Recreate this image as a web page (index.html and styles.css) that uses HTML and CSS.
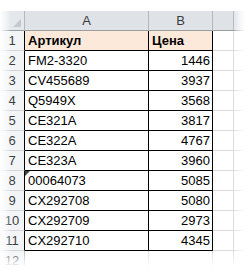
FILE: index.html
```html
<!DOCTYPE html>
<html>
<head>
<meta charset="utf-8">
<link rel="stylesheet" href="styles.css">
</head>
<body>
<div class="sheet">
  <table class="grid">
    <colgroup>
      <col class="c-rh"><col class="c-a"><col class="c-b"><col class="c-c"><col class="c-d">
    </colgroup>
    <tr class="hdr">
      <th class="corner"><span class="tri"></span></th>
      <th class="colh">A</th>
      <th class="colh">B</th>
      <th class="colh"></th>
      <th class="colh last"></th>
    </tr>
    <tr class="r1">
      <td class="rh">1</td><td class="d hd">Артикул</td><td class="d hd">Цена</td><td class="e"></td><td class="e"></td>
    </tr>
    <tr><td class="rh">2</td><td class="d">FM2-3320</td><td class="d n">1446</td><td class="e"></td><td class="e"></td></tr>
    <tr><td class="rh">3</td><td class="d">CV455689</td><td class="d n">3937</td><td class="e"></td><td class="e"></td></tr>
    <tr><td class="rh">4</td><td class="d">Q5949X</td><td class="d n">3568</td><td class="e"></td><td class="e"></td></tr>
    <tr><td class="rh">5</td><td class="d">CE321A</td><td class="d n">3817</td><td class="e"></td><td class="e"></td></tr>
    <tr><td class="rh">6</td><td class="d">CE322A</td><td class="d n">4767</td><td class="e"></td><td class="e"></td></tr>
    <tr><td class="rh">7</td><td class="d">CE323A</td><td class="d n">3960</td><td class="e"></td><td class="e"></td></tr>
    <tr><td class="rh">8</td><td class="d txt"><span class="flag"></span>00064073</td><td class="d n">5085</td><td class="e"></td><td class="e"></td></tr>
    <tr><td class="rh">9</td><td class="d">CX292708</td><td class="d n">5080</td><td class="e"></td><td class="e"></td></tr>
    <tr><td class="rh">10</td><td class="d">CX292709</td><td class="d n">2973</td><td class="e"></td><td class="e"></td></tr>
    <tr><td class="rh">11</td><td class="d">CX292710</td><td class="d n">4345</td><td class="e"></td><td class="e"></td></tr>
    <tr class="r12"><td class="rh">12</td><td class="e"></td><td class="e"></td><td class="e"></td><td class="e"></td></tr>
  </table>
  <div class="fade-left"></div>
  <div class="fade-right"></div>
  <div class="fade-bottom"></div>
</div>
</body>
</html>
```

FILE: styles.css
```css
html, body {
  margin: 0;
  padding: 0;
  background: #ffffff;
}
body {
  width: 248px;
  height: 277px;
  overflow: hidden;
  font-family: "Liberation Sans", Arial, sans-serif;
}
.sheet {
  position: relative;
  padding-top: 11px;
  width: 248px;
  height: 266px;
  overflow: hidden;
}
.grid {
  border-collapse: separate;
  border-spacing: 0;
  table-layout: fixed;
  width: 250px;
  font-size: 13px;
  color: #000;
}
.c-rh { width: 25px; }
.c-a { width: 124px; }
.c-b { width: 64px; }
.c-c { width: 21px; }
.c-d { width: 16px; }
th, td {
  height: 19px;
  padding: 0 3px;
  line-height: 19px;
  white-space: nowrap;
  overflow: hidden;
  box-sizing: content-box;
}
.hdr th {
  background: #dfe3e8;
  color: #3c3c3c;
  font-weight: normal;
  font-size: 13px;
  text-align: center;
  border-right: 1px solid #b4b8bd;
  border-bottom: 1px solid #9a9ea3;
  padding: 0;
}
.hdr th.corner {
  position: relative;
  background: #e4e7eb;
}
.tri {
  position: absolute;
  right: 3px;
  bottom: 3px;
  width: 0;
  height: 0;
  border-left: 8px solid transparent;
  border-bottom: 8px solid #c4c7cb;
}
.rh {
  background: #f3f4f6;
  color: #3c3c3c;
  text-align: center;
  padding: 0;
  border-right: 1px solid #000;
  border-bottom: 1px solid #d2d4d8;
}
.r12 .rh {
  border-right-color: #b4b8bd;
}
.d {
  border-right: 1px solid #000;
  border-bottom: 1px solid #000;
  position: relative;
}
.hd {
  background: #fde9d9;
  font-weight: bold;
}
.n {
  text-align: right;
  padding-right: 2px;
}
.e {
  border-right: 1px solid #dadada;
  border-bottom: 1px solid #dadada;
}
.flag {
  position: absolute;
  left: 0;
  top: 0;
  width: 0;
  height: 0;
  border-top: 5px solid #3a4a3a;
  border-right: 5px solid transparent;
}
.fade-left {
  position: absolute;
  left: 0;
  top: 0;
  width: 11px;
  height: 277px;
  background: linear-gradient(to right, #ffffff 0%, rgba(255,255,255,0.5) 55%, rgba(255,255,255,0) 100%);
}
.fade-right {
  position: absolute;
  right: 0;
  top: 0;
  width: 15px;
  height: 277px;
  background: linear-gradient(to right, rgba(255,255,255,0) 0%, rgba(255,255,255,0.6) 40%, #ffffff 85%);
}
.fade-bottom {
  position: absolute;
  left: 0;
  bottom: 0;
  width: 248px;
  height: 26px;
  background: linear-gradient(to bottom, rgba(255,255,255,0) 0%, rgba(255,255,255,0.6) 35%, #ffffff 60%);
}
```
